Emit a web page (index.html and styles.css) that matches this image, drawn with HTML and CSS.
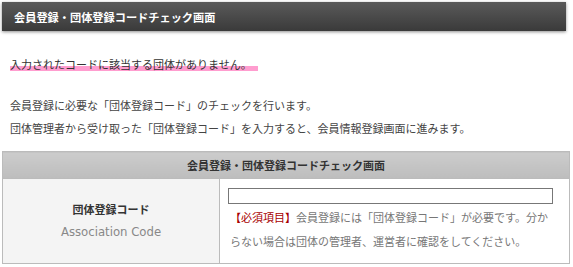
FILE: index.html
```html
<!DOCTYPE html>
<html lang="ja">
<head>
    <meta charset="UTF-8">
    <meta name="viewport" content="width=device-width, initial-scale=1.0">
    <title>会員登録・団体登録コードチェック画面</title>
    <link rel="stylesheet" href="styles.css">
</head>
<body>
    <div class="page-title">
        <h1>会員登録・団体登録コードチェック画面</h1>
    </div>

    <p class="error-message"><span>入力されたコードに該当する団体がありません。</span></p>

    <div class="intro">
        <p>会員登録に必要な「団体登録コード」のチェックを行います。</p>
        <p>団体管理者から受け取った「団体登録コード」を入力すると、会員情報登録画面に進みます。</p>
    </div>

    <table class="form-table">
        <tr>
            <th colspan="2" class="table-head">会員登録・団体登録コードチェック画面</th>
        </tr>
        <tr>
            <th class="field-name">
                <div class="label-ja">団体登録コード</div>
                <div class="label-en">Association Code</div>
            </th>
            <td class="field-value">
                <input type="text" id="groupCode">
                <p class="note"><span class="required">【必須項目】</span>会員登録には「団体登録コード」が必要です。分か<br>らない場合は団体の管理者、運営者に確認をしてください。</p>
            </td>
        </tr>
    </table>
</body>
</html>
```

FILE: styles.css
```css
body {
    margin: 0;
    padding: 0;
    background: #fff;
    color: #444;
    font-family: "Noto Sans CJK JP", "Noto Sans", sans-serif;
    font-size: 11px;
}

p {
    margin: 0;
}

.page-title {
    margin: 2px 7px 0 2px;
    height: 29px;
    display: flex;
    align-items: center;
    padding-left: 12px;
    background: linear-gradient(#5a5a5a, #3a3a3a);
    box-shadow: 0 1px 3px rgba(0, 0, 0, 0.45);
}

.page-title h1 {
    margin: 0;
    color: #fff;
    font-size: 11.2px;
    font-weight: bold;
}

.error-message {
    margin: 24px 0 0 10px;
    line-height: 18px;
    color: #333;
}

.error-message span {
    padding-right: 6px;
    background: linear-gradient(transparent 62%, #ff9dcf 62%, #ff9dcf 92%, transparent 92%);
}

.intro {
    margin: 21px 0 0 10px;
    line-height: 23px;
}

.form-table {
    margin: 11px 0 0 2px;
    width: 568px;
    border-collapse: collapse;
    border: 1px solid #bbb;
}

.table-head {
    height: 26px;
    padding: 0;
    background: linear-gradient(#cccccc, #bdbdbd);
    color: #333;
    font-size: 11px;
    font-weight: bold;
    text-align: center;
    border-bottom: 1px solid #bbb;
}

.field-name {
    width: 216px;
    padding: 0;
    background: #f4f4f4;
    border-right: 1px solid #bbb;
    text-align: center;
    vertical-align: middle;
}

.label-ja {
    color: #333;
    font-weight: bold;
    line-height: 22px;
}

.label-en {
    color: #888;
    font-family: "DejaVu Sans", sans-serif;
    font-size: 11.7px;
    font-weight: normal;
    line-height: 24px;
}

.field-value {
    padding: 9px 16px 10px 8px;
    vertical-align: top;
}

.field-value input {
    display: block;
    box-sizing: border-box;
    width: 325px;
    height: 16px;
    margin: 0;
    border: 1px solid #777;
    padding: 0 3px;
}

.note {
    margin-top: 1px;
    margin-left: 2px;
    line-height: 24px;
    color: #777;
}

.required {
    color: #a80000;
}
```
